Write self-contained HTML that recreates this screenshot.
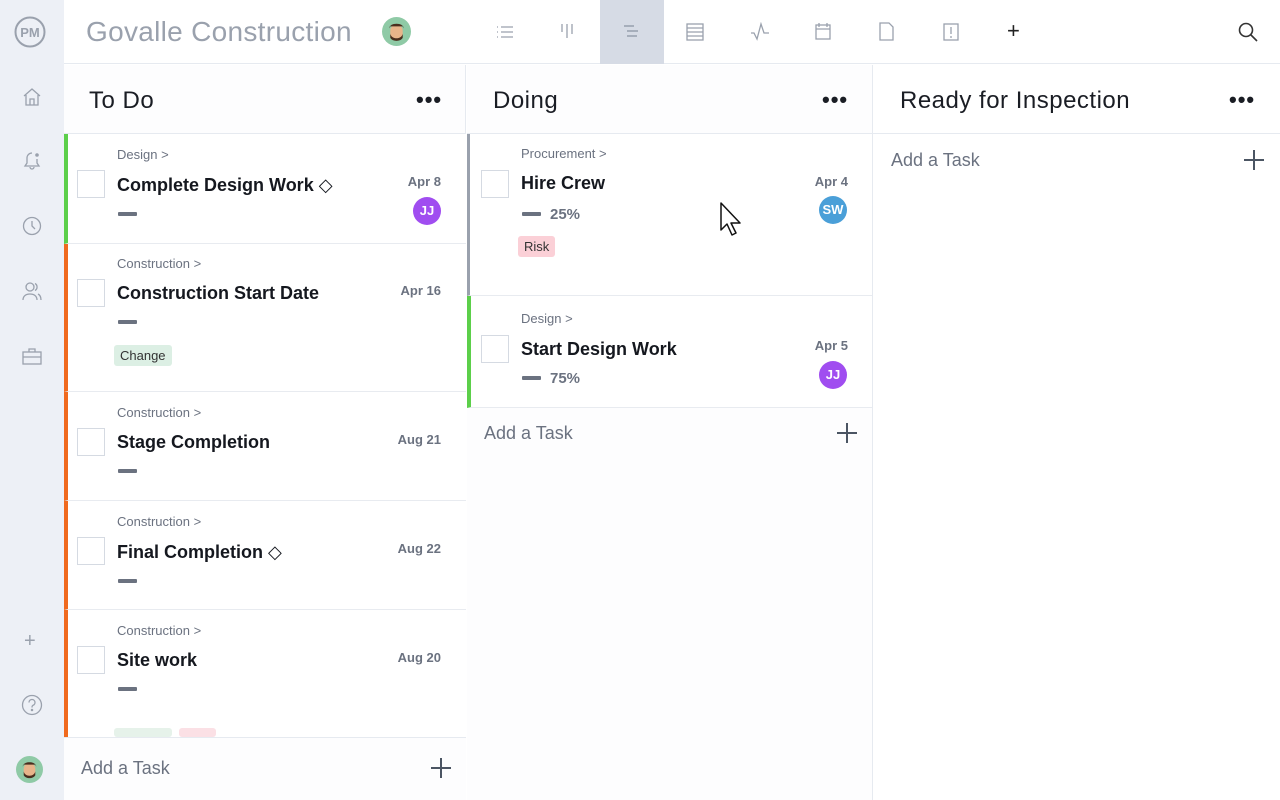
<!DOCTYPE html>
<html><head><meta charset="utf-8"><style>
*{box-sizing:border-box;margin:0;padding:0}
body{width:1280px;height:800px;overflow:hidden;font-family:"Liberation Sans",sans-serif;background:#fff;position:relative}
.abs{position:absolute}
.side{left:0;top:0;width:64px;height:800px;background:#edf0f6}
.hdr{left:64px;top:0;width:1216px;height:64px;background:#fff;border-bottom:1px solid #e6eaf0}
.col{top:65px;height:735px;background:#fdfdfe}
.colh{font-size:24px;color:#1a1d24;letter-spacing:.5px}
.dots{font-size:22px;font-weight:bold;color:#1a1d24;letter-spacing:1px}
.card{background:#fff;border-bottom:1px solid #e8ebf0}
.cat{font-size:13px;color:#6b7280}
.ttl{font-size:18px;font-weight:bold;color:#15181f}
.cb{width:28px;height:28px;border:1px solid #d5dae2;background:#fff}
.dash{width:19px;height:4px;background:#6b7280;border-radius:1px}
.date{font-size:13px;font-weight:bold;color:#6b7280;text-align:right;width:60px}
.av{width:28px;height:28px;border-radius:50%;color:#fff;font-size:13px;font-weight:bold;text-align:center;line-height:28px}
.pct{font-size:15px;font-weight:bold;color:#6b7280}
.tag{font-size:13px;color:#333;border-radius:3px;padding:3px 6px}
.add{font-size:18px;color:#6b7280}
.plus{width:20px;height:20px}
.plus:before,.plus:after{content:"";position:absolute;background:#4b5563}
.plus:before{left:9px;top:0;width:2px;height:20px}
.plus:after{left:0;top:9px;width:20px;height:2px}
</style></head><body>
<div class="abs side">
 <svg class="abs" style="left:14px;top:16px" width="32" height="32" viewBox="0 0 32 32"><circle cx="16" cy="16" r="14.5" fill="none" stroke="#9aa1ad" stroke-width="2"/><text x="16" y="21" text-anchor="middle" font-family="Liberation Sans" font-weight="bold" font-size="13" fill="#9aa1ad">PM</text></svg>
 <svg class="abs" style="left:22px;top:87px" width="20" height="20" viewBox="0 0 20 20" fill="none" stroke="#9aa1ad" stroke-width="1.3"><path d="M2 9L10 2l8 7M4 8v10h12V8M8 18v-6h4v6"/></svg>
 <svg class="abs" style="left:22px;top:150px" width="20" height="22" viewBox="0 0 20 22" fill="none" stroke="#9aa1ad" stroke-width="1.3"><path d="M10 3a5 5 0 0 0-5 5v5l-2 3h14l-2-3V9M8 17a2 2 0 0 0 4 0"/><circle cx="15" cy="5" r="1.8" fill="#9aa1ad" stroke="none"/></svg>
 <svg class="abs" style="left:22px;top:216px" width="20" height="20" viewBox="0 0 20 20" fill="none" stroke="#9aa1ad" stroke-width="1.3"><circle cx="10" cy="10" r="8.5"/><path d="M10 5v5l3 3"/></svg>
 <svg class="abs" style="left:21px;top:281px" width="22" height="20" viewBox="0 0 22 20" fill="none" stroke="#9aa1ad" stroke-width="1.3"><circle cx="9" cy="6" r="4"/><path d="M2 19c0-4 3-6 7-6s7 2 7 6M14 2.5a4 4 0 0 1 0 7M17 13c2 1 3 3 3 6"/></svg>
 <svg class="abs" style="left:22px;top:347px" width="20" height="18" viewBox="0 0 20 18" fill="none" stroke="#9aa1ad" stroke-width="1.3"><rect x="1" y="5" width="18" height="12"/><path d="M7 5V2h6v3M1 10h18"/></svg>
 <div class="abs" style="left:24px;top:630px;font-size:20px;color:#9aa1ad">+</div>
 <svg class="abs" style="left:21px;top:694px" width="22" height="22" viewBox="0 0 22 22" fill="none" stroke="#9aa1ad" stroke-width="1.3"><circle cx="11" cy="11" r="9.5"/><path d="M8 8.5a3 3 0 1 1 4 2.8c-1 .4-1 1-1 2.2"/><circle cx="11" cy="16" r=".6" fill="#9aa1ad"/></svg>
 <svg class="abs" style="left:16px;top:756px" width="27" height="27" viewBox="0 0 28 28"><circle cx="14" cy="14" r="14" fill="#8fcaa6"/><rect x="8" y="8" width="12" height="14" rx="5" fill="#e8b48a"/><path d="M7 11c0-6 14-6 14 0l-1-2H8z" fill="#4a2e1e"/><path d="M8 16c1 6 11 6 12 0v4c-2 4-10 4-12 0z" fill="#4a2e1e"/></svg>
</div>
<div class="abs hdr">
 <div class="abs" style="left:22px;top:16px;font-size:28px;color:#9aa1ad;letter-spacing:.3px">Govalle Construction</div>
 <svg class="abs" style="left:318px;top:17px" width="29" height="29" viewBox="0 0 28 28"><circle cx="14" cy="14" r="14" fill="#8fcaa6"/><rect x="8" y="8" width="12" height="14" rx="5" fill="#e8b48a"/><path d="M7 11c0-6 14-6 14 0l-1-2H8z" fill="#4a2e1e"/><path d="M8 16c1 6 11 6 12 0v4c-2 4-10 4-12 0z" fill="#4a2e1e"/></svg>
 <div class="abs" style="left:536px;top:0;width:64px;height:64px;background:#d6dbe5"></div>
 <svg class="abs" style="left:432px;top:24px" width="18" height="16" viewBox="0 0 18 16" stroke="#9aa1ad" stroke-width="1.3"><path d="M1 3h1M5 3h12M1 8h1M5 8h12M1 13h1M5 13h12"/></svg>
 <svg class="abs" style="left:496px;top:22px" width="14" height="16" viewBox="0 0 14 16" stroke="#9aa1ad" stroke-width="1.3"><path d="M2 2v8M7 2v14M12 2v10"/></svg>
 <svg class="abs" style="left:559px;top:24px" width="16" height="14" viewBox="0 0 16 14" stroke="#8a93a2" stroke-width="1.3"><path d="M1 2h10M4 7h11M4 12h10"/></svg>
 <svg class="abs" style="left:622px;top:23px" width="18" height="18" viewBox="0 0 18 18" fill="none" stroke="#9aa1ad" stroke-width="1.3"><rect x="1" y="1" width="16" height="16"/><path d="M1 5h16M1 9h16M1 13h16"/></svg>
 <svg class="abs" style="left:686px;top:22px" width="20" height="20" viewBox="0 0 20 20" fill="none" stroke="#9aa1ad" stroke-width="1.3"><path d="M1 11h3l3 6 4-15 3 9h5"/></svg>
 <svg class="abs" style="left:751px;top:22px" width="16" height="18" viewBox="0 0 16 18" fill="none" stroke="#9aa1ad" stroke-width="1.3"><rect x="1" y="3" width="14" height="14"/><path d="M1 7h14M4 1v4M12 1v4"/></svg>
 <svg class="abs" style="left:815px;top:22px" width="15" height="19" viewBox="0 0 15 19" fill="none" stroke="#9aa1ad" stroke-width="1.3"><path d="M1 1h9l4 4v13H1z"/></svg>
 <svg class="abs" style="left:879px;top:23px" width="16" height="18" viewBox="0 0 16 18" fill="none" stroke="#9aa1ad" stroke-width="1.3"><rect x="1" y="1" width="14" height="16"/><path d="M8 4v7M8 13v2"/></svg>
 <div class="abs" style="left:943px;top:18px;font-size:22px;color:#222">+</div>
 <svg class="abs" style="left:1174px;top:22px" width="20" height="20" viewBox="0 0 20 20" fill="none" stroke="#333" stroke-width="1.6"><circle cx="8" cy="8" r="6.5"/><path d="M13 13l6 6"/></svg>
</div>

<div class="abs col" style="left:64px;width:402px;border-right:1px solid #e6eaf0"></div>
<div class="abs colh" style="left:89px;top:87px">To Do</div>
<div class="abs dots" style="left:416px;top:87px">•••</div>
<div class="abs" style="left:64px;top:133px;width:402px;height:1px;background:#e6eaf0"></div>

<div class="abs card" style="left:64px;top:134px;width:402px;height:110px;border-left:4px solid #5ccf4a"></div>
<div class="abs cat" style="left:117px;top:147px">Design &gt;</div>
<div class="abs cb" style="left:77px;top:170px"></div>
<div class="abs ttl" style="left:117px;top:175px">Complete Design Work <span style="font-weight:normal">◇</span></div>
<div class="abs dash" style="left:118px;top:212px"></div>
<div class="abs date" style="left:381px;top:174px">Apr 8</div>
<div class="abs av" style="left:413px;top:197px;background:#a04df0">JJ</div>

<div class="abs card" style="left:64px;top:244px;width:402px;height:148px;border-left:4px solid #f06a1e"></div>
<div class="abs cat" style="left:117px;top:256px">Construction &gt;</div>
<div class="abs cb" style="left:77px;top:279px"></div>
<div class="abs ttl" style="left:117px;top:283px">Construction Start Date</div>
<div class="abs dash" style="left:118px;top:320px"></div>
<div class="abs date" style="left:381px;top:283px">Apr 16</div>
<div class="abs tag" style="left:114px;top:345px;background:#dcefe4">Change</div>

<div class="abs card" style="left:64px;top:392px;width:402px;height:109px;border-left:4px solid #f06a1e"></div>
<div class="abs cat" style="left:117px;top:405px">Construction &gt;</div>
<div class="abs cb" style="left:77px;top:428px"></div>
<div class="abs ttl" style="left:117px;top:432px">Stage Completion</div>
<div class="abs dash" style="left:118px;top:469px"></div>
<div class="abs date" style="left:381px;top:432px">Aug 21</div>

<div class="abs card" style="left:64px;top:501px;width:402px;height:109px;border-left:4px solid #f06a1e"></div>
<div class="abs cat" style="left:117px;top:514px">Construction &gt;</div>
<div class="abs cb" style="left:77px;top:537px"></div>
<div class="abs ttl" style="left:117px;top:542px">Final Completion <span style="font-weight:normal">◇</span></div>
<div class="abs dash" style="left:118px;top:579px"></div>
<div class="abs date" style="left:381px;top:541px">Aug 22</div>

<div class="abs card" style="left:64px;top:610px;width:402px;height:128px;border-left:4px solid #f06a1e"></div>
<div class="abs cat" style="left:117px;top:623px">Construction &gt;</div>
<div class="abs cb" style="left:77px;top:646px"></div>
<div class="abs ttl" style="left:117px;top:650px">Site work</div>
<div class="abs dash" style="left:118px;top:687px"></div>
<div class="abs date" style="left:381px;top:650px">Aug 20</div>
<div class="abs" style="left:114px;top:728px;width:58px;height:9px;background:#e6f2ea;border-radius:3px"></div>
<div class="abs" style="left:179px;top:728px;width:37px;height:9px;background:#fbe0e5;border-radius:3px"></div>
<div class="abs" style="left:64px;top:737px;width:402px;height:63px;background:#fdfdfe;border-top:1px solid #e6eaf0"></div>
<div class="abs add" style="left:81px;top:758px">Add a Task</div>
<div class="abs plus" style="left:431px;top:758px"></div>

<div class="abs col" style="left:467px;width:406px;border-right:1px solid #e6eaf0"></div>
<div class="abs colh" style="left:493px;top:87px">Doing</div>
<div class="abs dots" style="left:822px;top:87px">•••</div>
<div class="abs" style="left:467px;top:133px;width:405px;height:1px;background:#e6eaf0"></div>

<div class="abs card" style="left:467px;top:134px;width:405px;height:162px;border-left:3px solid #9aa1ad"></div>
<div class="abs cat" style="left:521px;top:146px">Procurement &gt;</div>
<div class="abs cb" style="left:481px;top:170px"></div>
<div class="abs ttl" style="left:521px;top:173px">Hire Crew</div>
<div class="abs dash" style="left:522px;top:212px"></div>
<div class="abs pct" style="left:550px;top:206px">25%</div>
<div class="abs date" style="left:788px;top:174px">Apr 4</div>
<div class="abs av" style="left:819px;top:196px;background:#4a9fd8">SW</div>
<div class="abs tag" style="left:518px;top:236px;background:#fbd0d7">Risk</div>
<svg class="abs" style="left:720px;top:202px" width="22" height="34" viewBox="0 0 22 34"><path d="M1 1v27l6-6 5 11 4-2-5-10h9z" fill="#fff" stroke="#111" stroke-width="1.5" stroke-linejoin="round"/></svg>

<div class="abs card" style="left:467px;top:296px;width:405px;height:112px;border-left:4px solid #5ccf4a"></div>
<div class="abs cat" style="left:521px;top:311px">Design &gt;</div>
<div class="abs cb" style="left:481px;top:335px"></div>
<div class="abs ttl" style="left:521px;top:339px">Start Design Work</div>
<div class="abs dash" style="left:522px;top:376px"></div>
<div class="abs pct" style="left:550px;top:370px">75%</div>
<div class="abs date" style="left:788px;top:338px">Apr 5</div>
<div class="abs av" style="left:819px;top:361px;background:#a04df0">JJ</div>
<div class="abs add" style="left:484px;top:423px">Add a Task</div>
<div class="abs plus" style="left:837px;top:423px"></div>

<div class="abs colh" style="left:900px;top:87px">Ready for Inspection</div>
<div class="abs dots" style="left:1229px;top:87px">•••</div>
<div class="abs" style="left:873px;top:133px;width:407px;height:1px;background:#e6eaf0"></div>
<div class="abs add" style="left:891px;top:150px">Add a Task</div>
<div class="abs plus" style="left:1244px;top:150px"></div>
</body></html>
